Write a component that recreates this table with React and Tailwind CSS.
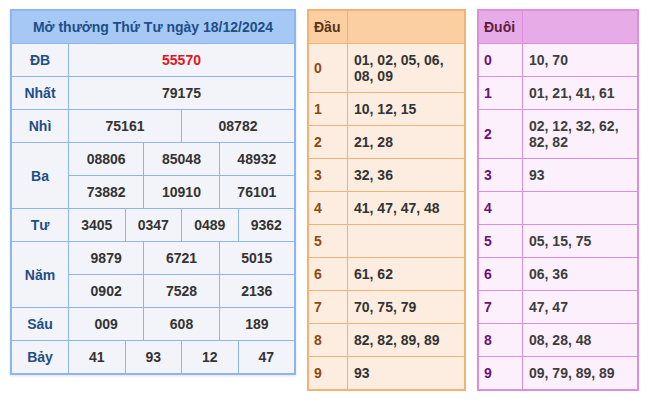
const font = { fontFamily: '"Liberation Sans", Arial, sans-serif' };

const results = [
  { label: "ĐB", nums: ["55570"], red: true },
  { label: "Nhất", nums: ["79175"] },
  { label: "Nhì", nums: ["75161", "08782"] },
  { label: "Ba", rows: [["08806", "85048", "48932"], ["73882", "10910", "76101"]] },
  { label: "Tư", nums: ["3405", "0347", "0489", "9362"] },
  { label: "Năm", rows: [["9879", "6721", "5015"], ["0902", "7528", "2136"]] },
  { label: "Sáu", nums: ["009", "608", "189"] },
  { label: "Bảy", nums: ["41", "93", "12", "47"] },
];

const spanClass = {
  1: "col-span-12",
  2: "col-span-6",
  3: "col-span-4",
  4: "col-span-3",
};

const dau = [
  "01, 02, 05, 06, 08, 09",
  "10, 12, 15",
  "21, 28",
  "32, 36",
  "41, 47, 47, 48",
  "",
  "61, 62",
  "70, 75, 79",
  "82, 82, 89, 89",
  "93",
];

const duoi = [
  "10, 70",
  "01, 21, 41, 61",
  "02, 12, 32, 62, 82, 82",
  "93",
  "",
  "05, 15, 75",
  "06, 36",
  "47, 47",
  "08, 28, 48",
  "09, 79, 89, 89",
];

const NumCell = ({ value, count, red }) => (
  <div
    className={`${spanClass[count]} flex h-[32px] items-center justify-center bg-[#f3f4f9] ${
      red ? "text-[#e3161b]" : "text-[#333333]"
    }`}
  >
    {value}
  </div>
);

const ResultTable = () => (
  <div className="grid w-[286px] grid-cols-[56px_repeat(12,minmax(0,1fr))] gap-px border-2 border-[#8db5ee] bg-[#8db5ee] text-[14px] font-bold leading-[16px] shadow-[0_1px_3px_rgba(0,0,0,0.12)]">
    <div className="col-span-13 flex h-[32px] items-center justify-center bg-[#a6c8f5] text-[#1d4f86]">
      Mở thưởng Thứ Tư ngày 18/12/2024
    </div>
    {results.map((r) =>
      r.rows ? (
        [
          <div
            key={r.label}
            className="row-span-2 flex items-center justify-center bg-[#f3f4f9] text-[#1d4f86]"
          >
            {r.label}
          </div>,
          ...r.rows.flatMap((row, i) =>
            row.map((n) => <NumCell key={`${r.label}-${i}-${n}`} value={n} count={row.length} />)
          ),
        ]
      ) : (
        [
          <div
            key={r.label}
            className="flex h-[32px] items-center justify-center bg-[#f3f4f9] text-[#1d4f86]"
          >
            {r.label}
          </div>,
          ...r.nums.map((n) => (
            <NumCell key={`${r.label}-${n}`} value={n} count={r.nums.length} red={r.red} />
          )),
        ]
      )
    )}
  </div>
);

const LotoTable = ({ title, data, theme }) => (
  <div
    className={`grid gap-px border-2 text-[14px] font-bold leading-[16px] ${theme.wrap}`}
  >
    <div className={`flex h-[32px] items-center px-[5px] ${theme.head} ${theme.title}`}>
      {title}
    </div>
    <div className={theme.head} />
    {data.map((v, i) => [
      <div key={`k${i}`} className={`flex items-center px-[5px] ${theme.cell} ${theme.key}`}>
        {i}
      </div>,
      <div
        key={`v${i}`}
        className={`flex min-h-[32px] items-center py-[8px] pl-[6px] pr-[8px] ${theme.cell} ${theme.val}`}
      >
        {v}
      </div>,
    ])}
  </div>
);

const orange = {
  wrap: "w-[159px] grid-cols-[38px_minmax(0,1fr)] border-[#f2b273] bg-[#f2b273]",
  head: "bg-[#fbcfa2]",
  title: "text-[#5a3412]",
  cell: "bg-[#fdede1]",
  key: "text-[#8c4a0e]",
  val: "text-[#333333]",
};

const purple = {
  wrap: "w-[162px] grid-cols-[43px_minmax(0,1fr)] border-[#dc8fdc] bg-[#dc8fdc]",
  head: "bg-[#e7abe7]",
  title: "text-[#5c1d3c]",
  cell: "bg-[#fcf0fc]",
  key: "text-[#6b117c]",
  val: "text-[#3d3d3d]",
};

export default function App() {
  return (
    <div
      className="flex h-[401px] w-[649px] items-start gap-[11px] bg-white pl-[10px] pt-[9px]"
      style={font}
    >
      <ResultTable />
      <LotoTable title="Đầu" data={dau} theme={orange} />
      <LotoTable title="Đuôi" data={duoi} theme={purple} />
    </div>
  );
}
